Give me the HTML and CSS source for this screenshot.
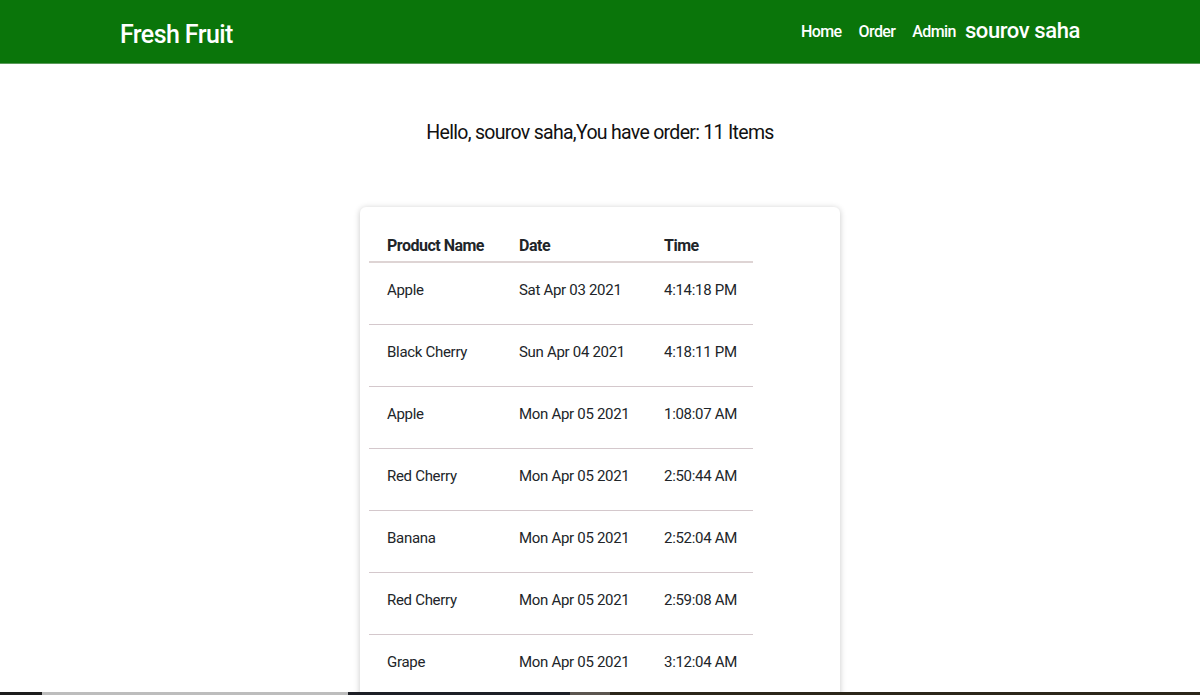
FILE: index.html
```html
<!DOCTYPE html>
<html lang="en">
<head>
<meta charset="utf-8">
<title>Fresh Fruit - Orders</title>
<link rel="stylesheet" href="styles.css">
</head>
<body>
<nav class="navbar">
  <div class="nav-inner">
    <a class="brand" href="#">Fresh Fruit</a>
    <div class="nav-links">
      <a class="nav-link" href="#">Home</a>
      <a class="nav-link" href="#">Order</a>
      <a class="nav-link" href="#">Admin</a>
      <span class="user-name">sourov saha</span>
    </div>
  </div>
</nav>
<main class="content">
  <h2 class="greeting">Hello, sourov saha,You have order: 11 Items</h2>
  <div class="card">
    <table class="orders">
      <thead>
        <tr><th class="c1">Product Name</th><th class="c2">Date</th><th class="c3">Time</th></tr>
      </thead>
      <tbody>
        <tr><td>Apple</td><td>Sat Apr 03 2021</td><td>4:14:18 PM</td></tr>
        <tr><td>Black Cherry</td><td>Sun Apr 04 2021</td><td>4:18:11 PM</td></tr>
        <tr><td>Apple</td><td>Mon Apr 05 2021</td><td>1:08:07 AM</td></tr>
        <tr><td>Red Cherry</td><td>Mon Apr 05 2021</td><td>2:50:44 AM</td></tr>
        <tr><td>Banana</td><td>Mon Apr 05 2021</td><td>2:52:04 AM</td></tr>
        <tr><td>Red Cherry</td><td>Mon Apr 05 2021</td><td>2:59:08 AM</td></tr>
        <tr><td>Grape</td><td>Mon Apr 05 2021</td><td>3:12:04 AM</td></tr>
      </tbody>
    </table>
  </div>
</main>
<div class="taskbar">
  <span class="tb tb-a"></span><span class="tb tb-b"></span><span class="tb tb-c"></span><span class="tb tb-d"></span><span class="tb tb-e"></span>
</div>
</body>
</html>
```
FILE: styles.css
```css
* { box-sizing: border-box; }
html, body { margin: 0; padding: 0; }
body {
  font-family: Roboto, "Open Sans", sans-serif;
  color: #212529;
  background: #fff;
  overflow: hidden;
  height: 695px;
}
.navbar {
  background: #0a750a;
  height: 64px;
  border-bottom: 1px solid #5a9a5a;
}
.nav-inner {
  width: 960px;
  margin: 0 auto;
  height: 100%;
  display: flex;
  align-items: center;
  justify-content: space-between;
}
.brand {
  color: #fff;
  text-decoration: none;
  font-size: 25px;
  font-weight: 500;
  letter-spacing: -0.6px;
  margin-top: 5px;
}
.nav-links {
  display: flex;
  align-items: center;
}
.nav-link {
  color: #fff;
  text-decoration: none;
  font-size: 16px;
  font-weight: 500;
  letter-spacing: -0.6px;
  margin-right: 17px;
}
.nav-link:nth-child(3) { margin-right: 9px; }
.user-name {
  color: #fff;
  font-size: 22px;
  font-weight: 500;
  letter-spacing: -0.4px;
  margin-top: -3px;
}
.content {
  display: flex;
  flex-direction: column;
  align-items: center;
}
.greeting {
  font-size: 19.5px;
  font-weight: 400;
  letter-spacing: -0.7px;
  margin: 56px 0 0;
  line-height: 26px;
  color: #111;
}
.card {
  width: 480px;
  margin-top: 61px;
  background: #fff;
  border-radius: 6px;
  box-shadow: 0 1px 6px rgba(0,0,0,0.22);
  padding: 22px 9px 30px;
}
.orders {
  width: 384px;
  border-collapse: collapse;
}
.orders th {
  text-align: left;
  font-size: 16px;
  font-weight: 700;
  letter-spacing: -0.5px;
  padding: 6px 0 6px 18px;
  border-bottom: 2px solid #ded4d4;
  height: 33px;
}
.orders th.c1 { width: 132px; }
.orders th.c2 { width: 145px; }
.orders td {
  font-size: 15px;
  letter-spacing: -0.3px;
  padding: 0 0 6px 18px;
  height: 62px;
  border-bottom: 1px solid #d4c8cc;
  vertical-align: middle;
}
.taskbar {
  position: fixed;
  left: 0;
  right: 0;
  bottom: 0;
  height: 3px;
  display: flex;
}
.tb { display: block; height: 100%; }
.tb-a { width: 42px; background: #1c1c1c; }
.tb-b { width: 306px; background: #bdbdbd; }
.tb-c { width: 222px; background: #1d1f26; }
.tb-d { width: 40px; background: #5b554f; }
.tb-e { flex: 1; background: #2b2619; }
```
